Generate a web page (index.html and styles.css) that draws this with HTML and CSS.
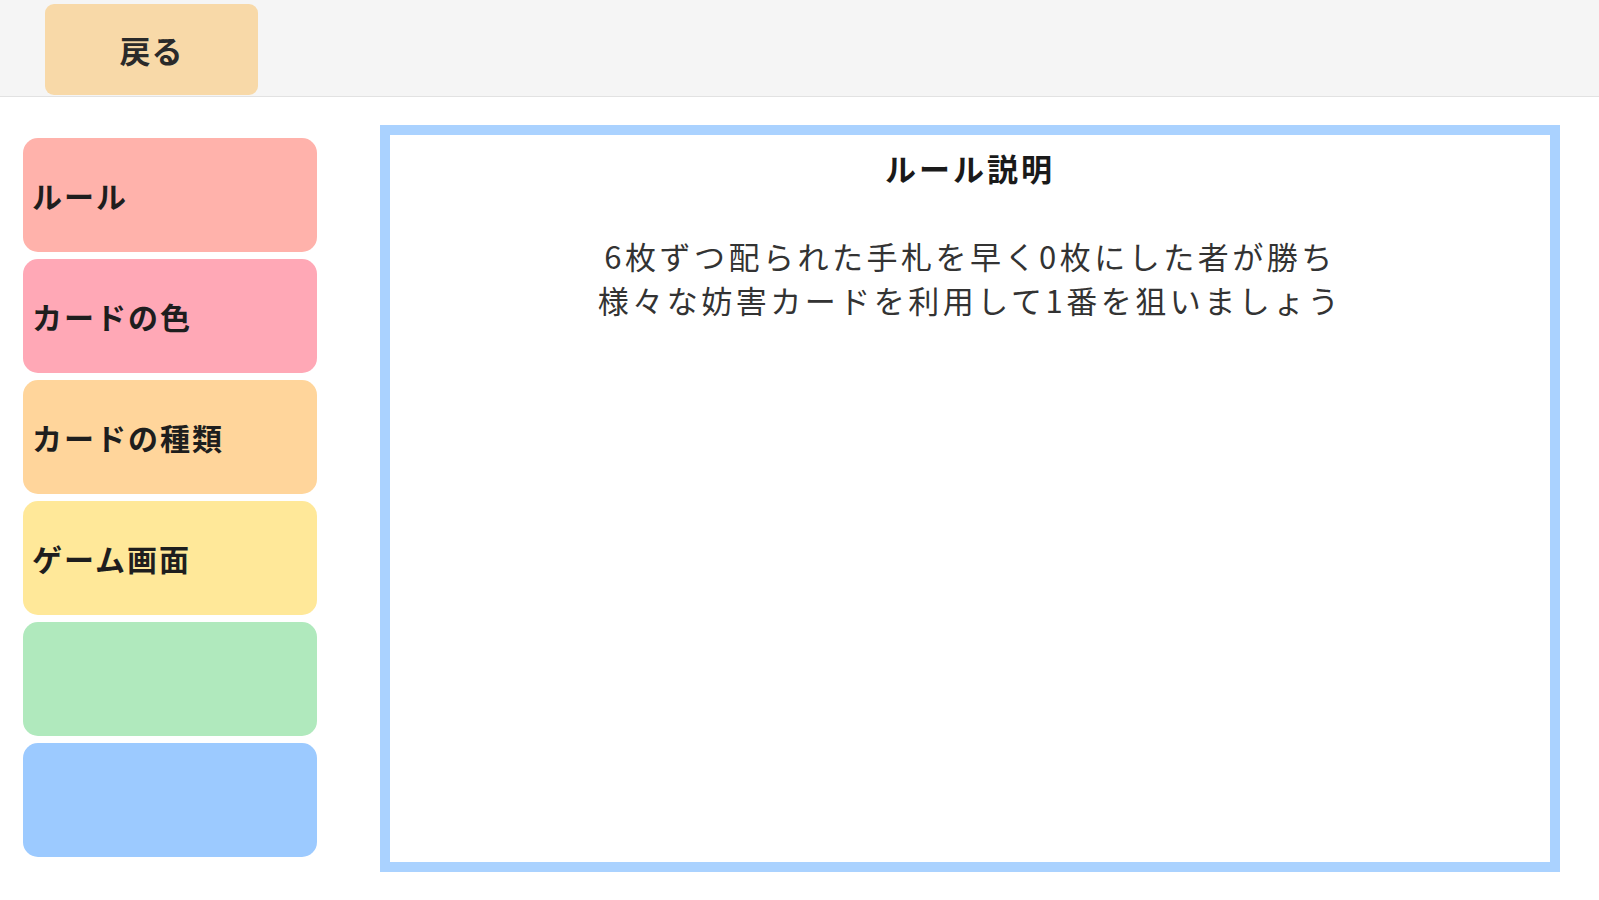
FILE: index.html
```html
<!DOCTYPE html>
<html lang="ja">
<head>
  <meta charset="UTF-8">
  <title>ルール説明</title>
  <link rel="stylesheet" href="styles.css">
</head>
<body>
  <header class="top-bar">
    <button class="back-btn">戻る</button>
  </header>
  <main class="content">
    <nav class="menu">
      <div class="menu-item item-rule">ルール</div>
      <div class="menu-item item-color">カードの色</div>
      <div class="menu-item item-kind">カードの種類</div>
      <div class="menu-item item-game">ゲーム画面</div>
      <div class="menu-item item-green"></div>
      <div class="menu-item item-blue"></div>
    </nav>
    <section class="rule-panel">
      <h2 class="rule-title">ルール説明</h2>
      <p class="rule-text">6枚ずつ配られた手札を早く0枚にした者が勝ち<br>様々な妨害カードを利用して1番を狙いましょう</p>
    </section>
  </main>
</body>
</html>
```

FILE: styles.css
```css
body {
  margin: 0;
  background: #ffffff;
  font-family: "Noto Sans CJK JP", "Noto Sans", sans-serif;
  color: #222222;
}
.top-bar {
  height: 96px;
  background-color: #f5f5f5;
  border-bottom: 1px solid #e2e2e2;
  box-sizing: content-box;
  padding: 0 0 0 45px;
}
.back-btn {
  margin-top: 4px;
  width: 213px;
  height: 91px;
  background-color: #f8d9a8;
  border: none;
  border-radius: 9px;
  font-family: inherit;
  font-size: 31px;
  font-weight: bold;
  color: #2a2a2a;
  letter-spacing: 1px;
  cursor: pointer;
}
.content {
  display: flex;
  gap: 63px;
  padding: 28px 0 0 23px;
}
.menu {
  display: flex;
  flex-direction: column;
  gap: 7px;
  width: 294px;
  margin-top: 13px;
}
.menu-item {
  height: 114px;
  border-radius: 15px;
  display: flex;
  align-items: center;
  padding-left: 9px;
  font-size: 30px;
  font-weight: bold;
  letter-spacing: 2px;
  color: #1e1e1e;
}
.item-rule { background-color: #ffb2ab; }
.item-color { background-color: #ffa8b6; }
.item-kind { background-color: #ffd59b; }
.item-game { background-color: #ffe899; }
.item-green { background-color: #b0e9bd; }
.item-blue { background-color: #9ccaff; }
.rule-panel {
  width: 1160px;
  height: 727px;
  border: 10px solid #aad2ff;
  text-align: center;
}
.rule-title {
  margin: 12px 0 0;
  font-size: 31px;
  line-height: 42px;
  letter-spacing: 3px;
  color: #1a1a1a;
}
.rule-text {
  margin: 45px 0 0;
  font-size: 31px;
  line-height: 44px;
  letter-spacing: 3.5px;
  color: #333333;
}
```
